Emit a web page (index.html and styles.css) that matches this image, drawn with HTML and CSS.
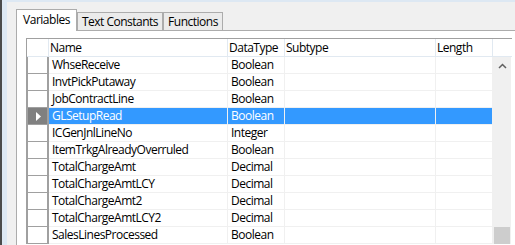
FILE: index.html
```html
<!DOCTYPE html>
<html>
<head>
<meta charset="utf-8">
<link rel="stylesheet" href="styles.css">
</head>
<body>
<div class="screen">
  <div class="frame">
    <div class="tabs">
      <div class="tab active t-var">Variables</div>
      <div class="tab t-txt">Text Constants</div>
      <div class="tab t-fn">Functions</div>
    </div>
    <div class="panel">
      <div class="grid">
        <div class="head">
          <div class="hc rh"></div>
          <div class="hc c-name">Name</div>
          <div class="hc c-type">DataType</div>
          <div class="hc c-sub">Subtype</div>
          <div class="hc c-len">Length</div>
          <div class="hc c-sb"></div>
        </div>
        <div class="body">
          <div class="rows">
            <div class="row"><div class="rh"></div><div class="c c-name">WhseReceive</div><div class="c c-type">Boolean</div><div class="c c-sub"></div><div class="c c-len"></div></div>
            <div class="row"><div class="rh"></div><div class="c c-name">InvtPickPutaway</div><div class="c c-type">Boolean</div><div class="c c-sub"></div><div class="c c-len"></div></div>
            <div class="row"><div class="rh"></div><div class="c c-name">JobContractLine</div><div class="c c-type">Boolean</div><div class="c c-sub"></div><div class="c c-len"></div></div>
            <div class="row sel"><div class="rh"><svg class="tri" width="6" height="9" viewBox="0 0 6 9"><path d="M0 0 L5 4.5 L0 9 Z" fill="#fff"/></svg></div><div class="c c-name">GLSetupRead</div><div class="c c-type">Boolean</div><div class="c c-sub"></div><div class="c c-len"></div></div>
            <div class="row"><div class="rh"></div><div class="c c-name">ICGenJnlLineNo</div><div class="c c-type">Integer</div><div class="c c-sub"></div><div class="c c-len"></div></div>
            <div class="row"><div class="rh"></div><div class="c c-name">ItemTrkgAlreadyOverruled</div><div class="c c-type">Boolean</div><div class="c c-sub"></div><div class="c c-len"></div></div>
            <div class="row"><div class="rh"></div><div class="c c-name">TotalChargeAmt</div><div class="c c-type">Decimal</div><div class="c c-sub"></div><div class="c c-len"></div></div>
            <div class="row"><div class="rh"></div><div class="c c-name">TotalChargeAmtLCY</div><div class="c c-type">Decimal</div><div class="c c-sub"></div><div class="c c-len"></div></div>
            <div class="row"><div class="rh"></div><div class="c c-name">TotalChargeAmt2</div><div class="c c-type">Decimal</div><div class="c c-sub"></div><div class="c c-len"></div></div>
            <div class="row"><div class="rh"></div><div class="c c-name">TotalChargeAmtLCY2</div><div class="c c-type">Decimal</div><div class="c c-sub"></div><div class="c c-len"></div></div>
            <div class="row"><div class="rh"></div><div class="c c-name">SalesLinesProcessed</div><div class="c c-type">Boolean</div><div class="c c-sub"></div><div class="c c-len"></div></div>
          </div>
          <div class="vscroll">
            <div class="sb-btn"><svg width="9" height="6" viewBox="0 0 9 6"><path d="M1 5 L4.5 1.5 L8 5" fill="none" stroke="#606060" stroke-width="1.5"/></svg></div>
            <div class="sb-track"><div class="sb-thumb"></div></div>
          </div>
        </div>
      </div>
    </div>
  </div>
</div>
</body>
</html>
```
FILE: styles.css
```css
* { box-sizing: border-box; }
html, body { margin: 0; padding: 0; }
body {
  width: 515px;
  height: 245px;
  overflow: hidden;
  font-family: "Open Sans", "Liberation Sans", sans-serif;
  font-size: 12px;
  letter-spacing: -0.5px;
  color: #000;
}
.screen {
  height: 245px;
  border-left: 2px solid #4b4b4b;
  overflow: hidden;
}
.frame {
  height: 100%;
  border-left: 5px solid #dde8f3;
  border-top: 2px solid #dde8f3;
  background: #f0f0f0;
  overflow: hidden;
}
.tabs {
  display: flex;
  align-items: flex-end;
  margin-top: 7px;
  padding-left: 9px;
  position: relative;
  z-index: 1;
}
.tab {
  height: 18px;
  border: 1px solid #acacac;
  border-bottom: none;
  background: #ebebeb;
  text-align: center;
  line-height: 17px;
  white-space: nowrap;
}
.tab.active {
  height: 22px;
  background: #fff;
  margin-bottom: -1px;
  line-height: 19px;
}
.t-var { width: 61px; }
.t-txt { width: 86px; }
.t-fn { width: 60px; }
.panel {
  width: 620px;
  height: 300px;
  margin-left: 9px;
  border: 1px solid #acacac;
  background: #fff;
  padding: 7px 0 0 9px;
}
.grid {
  width: 486px;
  border-top: 1px solid #a0a0a0;
  border-left: 1px solid #a0a0a0;
}
.head {
  display: flex;
  height: 18px;
}
.hc {
  height: 18px;
  border-right: 1px solid #e1e9f1;
  border-bottom: 1px solid #e1e9f1;
  padding-left: 1px;
  line-height: 17px;
  white-space: nowrap;
}
.rh { width: 22px; flex: none; }
.c-name { width: 179px; }
.c-type { width: 57px; }
.c-sub { width: 151px; }
.c-len { width: 57px; }
.c-sb { width: 19px; border-right: none; }
.body { display: flex; align-items: stretch; }
.rows { width: 466px; flex: none; }
.row { display: flex; height: 17px; }
.row .rh {
  height: 17px;
  border-left: 1px solid #a0a0a0;
  border-right: 2px solid #a0a0a0;
  border-bottom: 1px solid #a0a0a0;
  display: flex;
  align-items: center;
  justify-content: center;
}
.c {
  height: 17px;
  border-right: 1px solid #f0f0f0;
  border-bottom: 1px solid #f0f0f0;
  padding-left: 3px;
  line-height: 16px;
  white-space: nowrap;
}
.row.sel .c { background: #3399ff; color: #fff; }
.row.sel .rh { background: #808080; }
.tri { display: block; margin-left: 2px; }
.vscroll {
  width: 18px;
  flex: none;
  display: flex;
  flex-direction: column;
  background: #f0f0f0;
  overflow: hidden;
}
.sb-btn {
  height: 17px;
  flex: none;
  display: flex;
  align-items: center;
  justify-content: center;
}
.sb-track { flex: 1 1 0; min-height: 0; padding: 153px 1px 0 1px; }
.sb-thumb { height: 40px; background: #cdcdcd; }
```
